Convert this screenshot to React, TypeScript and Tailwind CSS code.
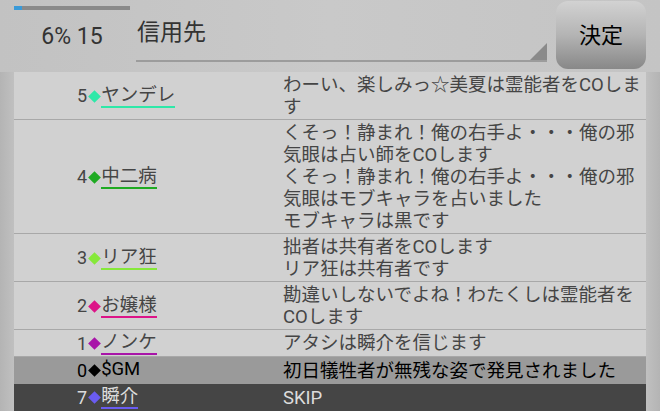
type Row = {
  no: number;
  name: string;
  color: string;
  lines: string[];
  kind?: "gm" | "self";
};

const rows: Row[] = [
  { no: 5, name: "ヤンデレ", color: "bg-[#2ee8a8]", lines: ["わーい、楽しみっ☆美夏は霊能者をCOします"] },
  {
    no: 4,
    name: "中二病",
    color: "bg-[#1faa22]",
    lines: [
      "くそっ！静まれ！俺の右手よ・・・俺の邪気眼は占い師をCOします",
      "くそっ！静まれ！俺の右手よ・・・俺の邪気眼はモブキャラを占いました",
      "モブキャラは黒です",
    ],
  },
  { no: 3, name: "リア狂", color: "bg-[#86e83a]", lines: ["拙者は共有者をCOします", "リア狂は共有者です"] },
  { no: 2, name: "お嬢様", color: "bg-[#dc1488]", lines: ["勘違いしないでよね！わたくしは霊能者をCOします"] },
  { no: 1, name: "ノンケ", color: "bg-[#a814a8]", lines: ["アタシは瞬介を信じます"] },
  { no: 0, name: "$GM", color: "bg-[#000000]", lines: ["初日犠牲者が無残な姿で発見されました"], kind: "gm" },
  { no: 7, name: "瞬介", color: "bg-[#6a5cf0]", lines: ["SKIP"], kind: "self" },
];

const underline: Record<string, string> = {
  "bg-[#2ee8a8]": "border-[#2ee8a8]",
  "bg-[#1faa22]": "border-[#1faa22]",
  "bg-[#86e83a]": "border-[#86e83a]",
  "bg-[#dc1488]": "border-[#dc1488]",
  "bg-[#a814a8]": "border-[#a814a8]",
  "bg-[#6a5cf0]": "border-[#6a5cf0]",
  "bg-[#000000]": "border-transparent",
};

const LogRow = ({ row }: { row: Row }) => {
  const rowClass =
    row.kind === "gm"
      ? "bg-[#9a9a9a] text-black h-[27px] items-center"
      : row.kind === "self"
        ? "bg-[#454545] text-[#dcdcdc] h-[27px] items-center"
        : "bg-[#d1d1d1] text-[#454545] pt-[2px] pb-[1px] border-b border-[#a8a8a8]";
  return (
    <div className={`flex shrink-0 ${rowClass}`}>
      <div className="w-[269px] pl-[63px] flex items-center">
        <span className="text-[18px] leading-[22px]">{row.no}</span>
        <span className="w-[14px] h-[14px] flex items-center justify-center">
          <span className={`block w-[9px] h-[9px] rotate-45 ${row.color}`} />
        </span>
        <span className={`leading-[21px] border-b-2 ${underline[row.color]}`}>{row.name}</span>
      </div>
      <div className="flex-1 pr-[2px] leading-[22px]">
        {row.lines.map((l, i) => (
          <div key={i}>{l}</div>
        ))}
      </div>
    </div>
  );
};

export default function App() {
  return (
    <div className="w-[660px] h-[411px] overflow-hidden flex flex-col bg-[#c8c8c8] font-['Roboto','Noto_Sans_CJK_JP',sans-serif] text-[18.5px]">
      <div className="h-[72px] flex shrink-0 bg-gradient-to-r from-[#c2c2c2] via-[#c9c9c9] to-[#c4c4c4]">
        <div className="ml-[14px] w-[122px] flex flex-col">
          <div className="mt-[6px] w-[116px] h-[4px] bg-[#8a8a8a]">
            <div className="w-[8px] h-full bg-[#3a9ad8]" />
          </div>
          <div className="w-[116px] mt-[13px] text-center text-[23px] leading-[28px] text-[#333]">6% 15</div>
        </div>
        <div className="relative w-[411px] h-[62px] border-b-2 border-[#9c9c9c]">
          <div className="pt-[18px] pl-[1px] text-[23px] leading-[30px] text-[#333]">信用先</div>
          <div className="absolute right-0 bottom-0 w-0 h-0 border-l-[17px] border-l-transparent border-b-[17px] border-b-[#8a8a8a]" />
        </div>
        <div className="ml-[9px] mt-[1px] w-[90px] h-[68px] rounded-[12px] bg-gradient-to-b from-[#d2d2d2] via-[#b4b4b4] to-[#888888] flex items-center justify-center text-[22px] text-black">
          決定
        </div>
      </div>
      <div className="flex flex-1 min-h-0">
        <div className="w-[14px] bg-gradient-to-r from-[#b4b4b4] to-[#c0c0c0]" />
        <div className="w-[632px] flex flex-col">
          {rows.map((r) => (
            <LogRow key={r.no} row={r} />
          ))}
        </div>
        <div className="flex-1 bg-gradient-to-r from-[#c0c0c0] to-[#b4b4b4]" />
      </div>
    </div>
  );
}
